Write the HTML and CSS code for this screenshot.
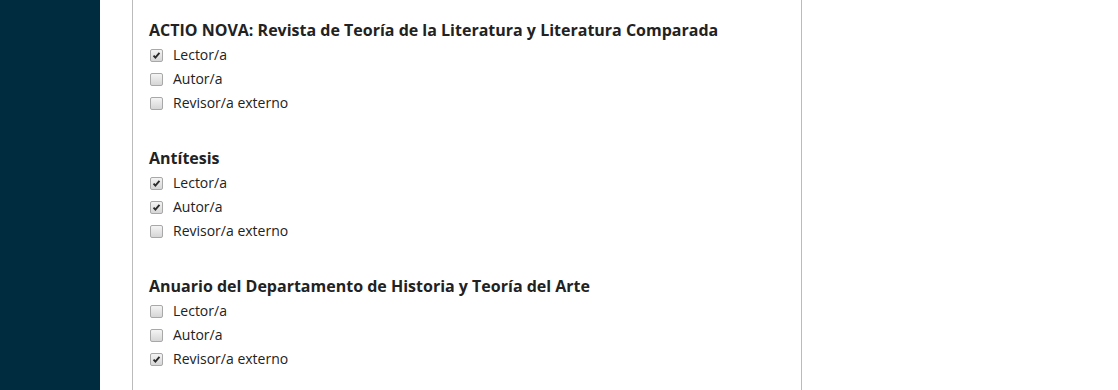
FILE: index.html
```html
<!DOCTYPE html>
<html lang="es">
<head>
<meta charset="utf-8">
<title>Roles</title>
<link rel="stylesheet" href="styles.css">
</head>
<body>
<div class="layout">
  <aside class="sidebar"></aside>
  <main class="main">
    <section class="panel">
      <div class="group">
        <h3 class="group-title">ACTIO NOVA: Revista de Teoría de la Literatura y Literatura Comparada</h3>
        <label class="option"><span class="box checked"><svg viewBox="0 0 13 13"><path d="M3 6.6 L5.2 9 L10 3.4" /></svg></span>Lector/a</label>
        <label class="option"><span class="box"></span>Autor/a</label>
        <label class="option"><span class="box"></span>Revisor/a externo</label>
      </div>
      <div class="group">
        <h3 class="group-title">Antítesis</h3>
        <label class="option"><span class="box checked"><svg viewBox="0 0 13 13"><path d="M3 6.6 L5.2 9 L10 3.4" /></svg></span>Lector/a</label>
        <label class="option"><span class="box checked"><svg viewBox="0 0 13 13"><path d="M3 6.6 L5.2 9 L10 3.4" /></svg></span>Autor/a</label>
        <label class="option"><span class="box"></span>Revisor/a externo</label>
      </div>
      <div class="group">
        <h3 class="group-title">Anuario del Departamento de Historia y Teoría del Arte</h3>
        <label class="option"><span class="box"></span>Lector/a</label>
        <label class="option"><span class="box"></span>Autor/a</label>
        <label class="option"><span class="box checked"><svg viewBox="0 0 13 13"><path d="M3 6.6 L5.2 9 L10 3.4" /></svg></span>Revisor/a externo</label>
      </div>
    </section>
  </main>
</div>
</body>
</html>
```
FILE: styles.css
```css
html, body {
  margin: 0;
  padding: 0;
  height: 100%;
  background: #fff;
}
body {
  font-family: "Open Sans", "Noto Sans", sans-serif;
  color: #222;
  overflow: hidden;
}
.layout {
  display: flex;
  height: 390px;
}
.sidebar {
  width: 100px;
  flex: none;
  background: #002c40;
}
.main {
  flex: none;
  padding-left: 32px;
}
.panel {
  width: 636px;
  height: 100%;
  box-sizing: content-box;
  border-left: 1px solid #bbb;
  border-right: 1px solid #bbb;
  padding: 19px 16px 0 16px;
}
.group {
  display: flex;
  flex-direction: column;
  margin-bottom: 32px;
}
.group-title {
  margin: 0 0 1px 0;
  font-size: 16px;
  font-weight: 700;
  line-height: 23px;
  color: #222;
}
.option {
  display: flex;
  align-items: center;
  height: 24px;
  font-size: 14px;
  line-height: 24px;
  color: #222;
}
.box {
  width: 11px;
  height: 11px;
  margin: 0 10px 0 1px;
  border: 1px solid #a8a8a8;
  border-radius: 2px;
  background: linear-gradient(#f4f4f4, #d6d6d6);
  display: flex;
  align-items: center;
  justify-content: center;
  flex: none;
}
.box svg {
  width: 13px;
  height: 13px;
  fill: none;
  stroke: #2a2a2a;
  stroke-width: 2.2;
}
```
